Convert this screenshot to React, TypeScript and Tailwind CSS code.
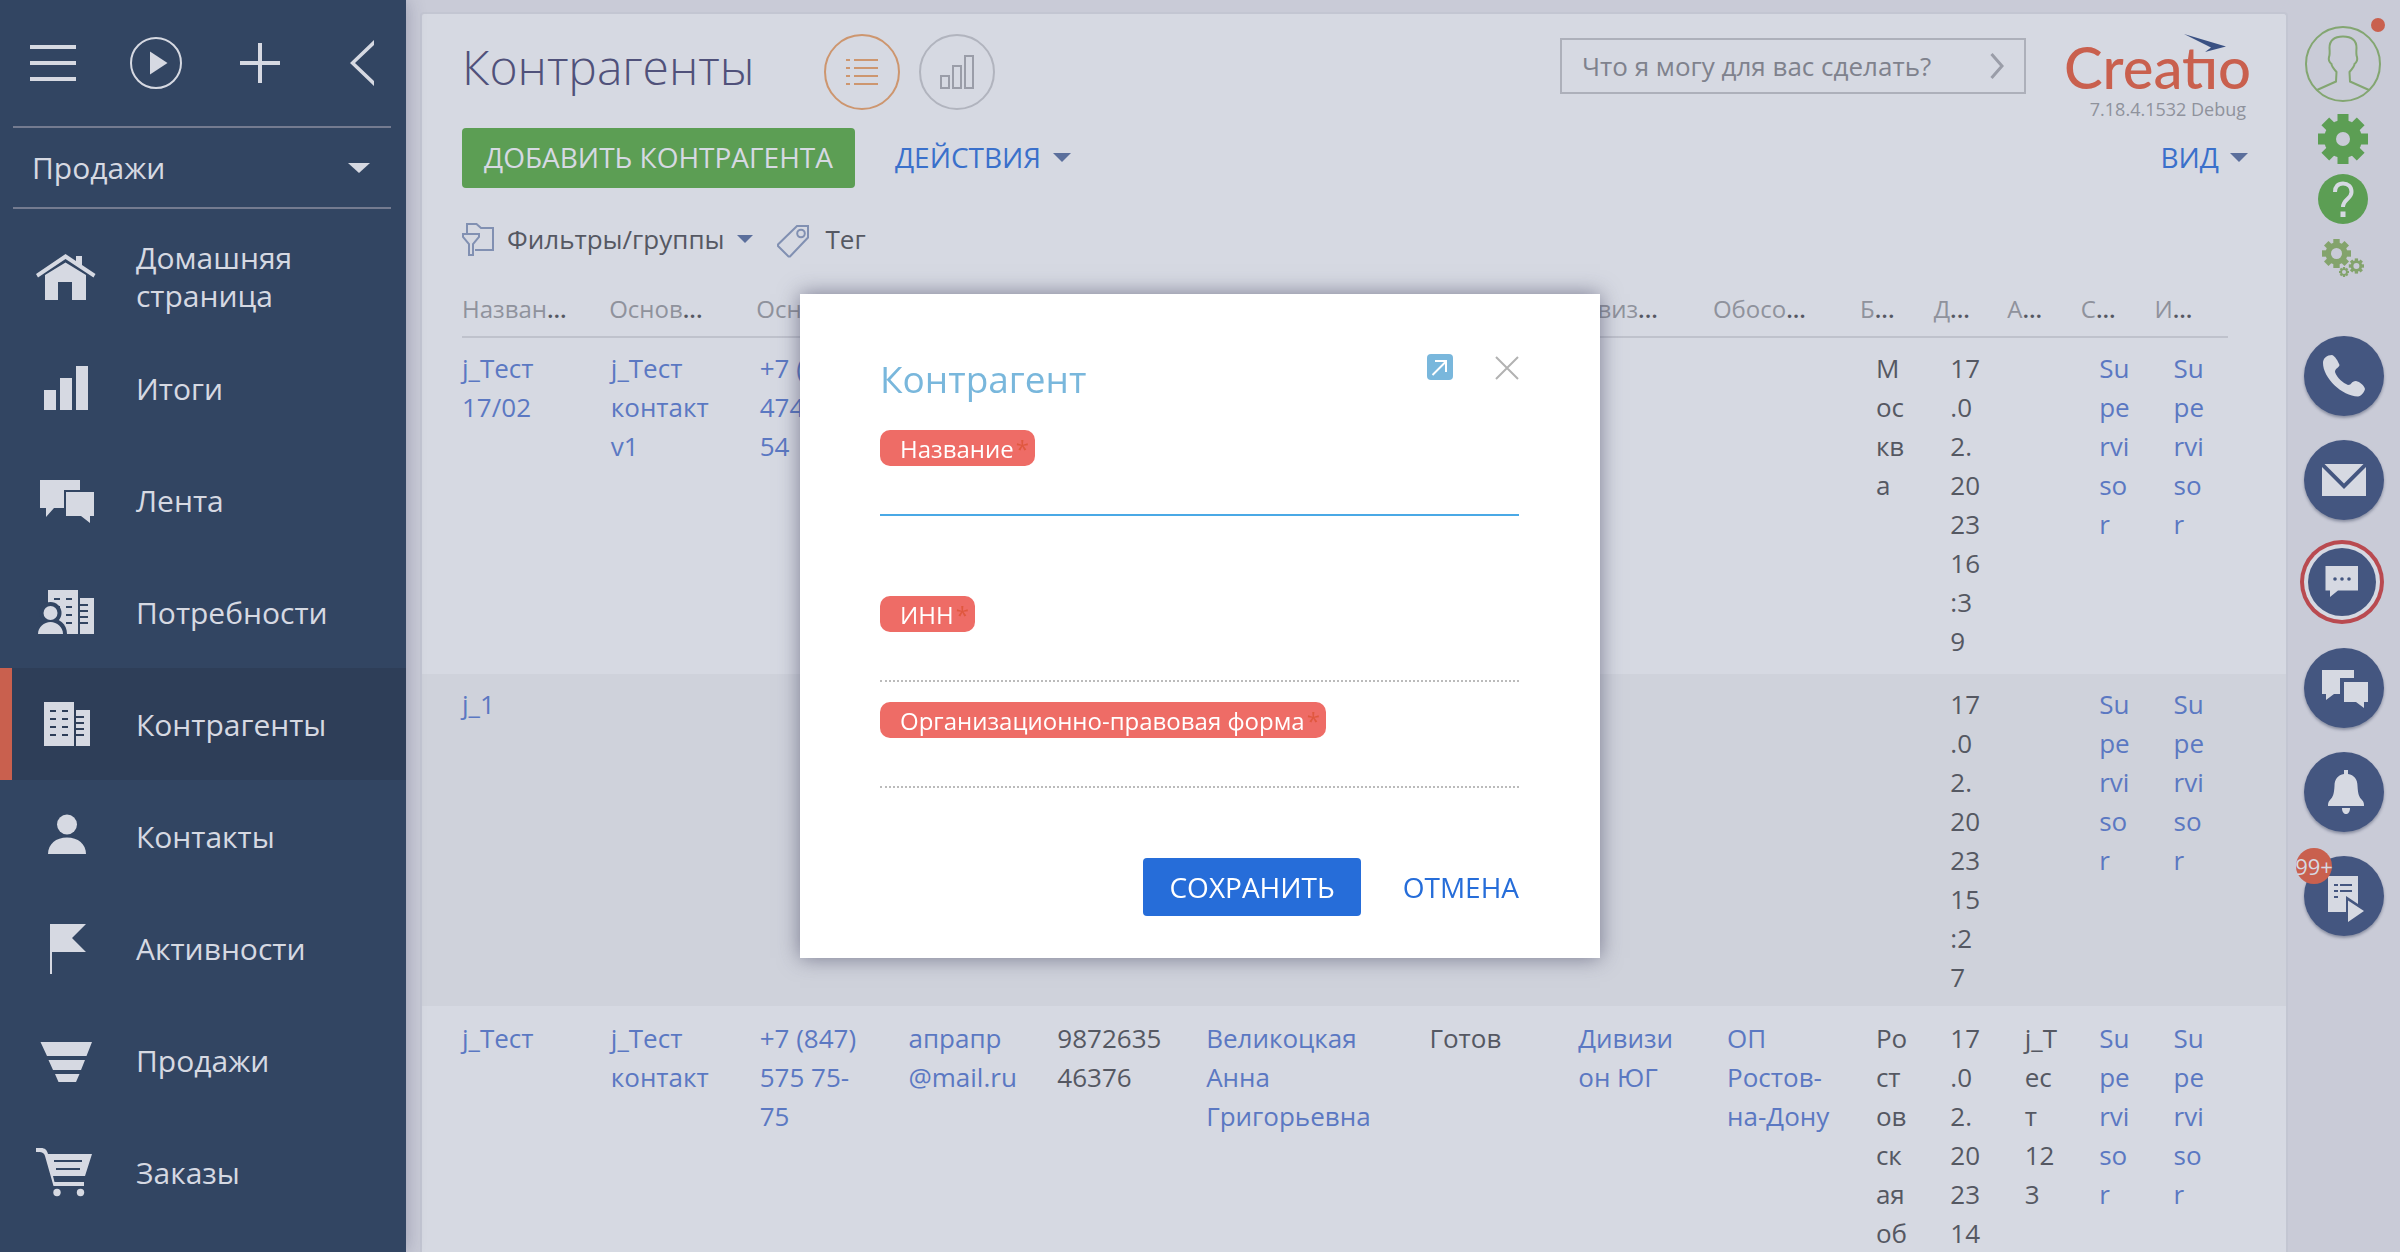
import React from "react";

const windowRows = [16, 24, 32, 40];
const notchRows = [22, 28, 34, 40];

function Building({ x, gap }: { x: number; gap: string }) {
  return (
    <g>
      <rect x={x} y="8" width="30" height="44" />
      <rect x={x + 32} y="16" width="14" height="36" />
      <g fill={gap}>
        {windowRows.map((y) => (
          <React.Fragment key={y}>
            <rect x={x + 6} y={y} width="6" height="2" />
            <rect x={x + 18} y={y} width="6" height="2" />
          </React.Fragment>
        ))}
        {notchRows.map((y) => (
          <rect key={y} x={x + 32} y={y} width="8" height="2" />
        ))}
      </g>
    </g>
  );
}

const navItems: { label: string; active?: boolean; icon: React.ReactNode }[] = [
  {
    label: "Домашняя страница",
    icon: (
      <g>
        <path d="M29.5 8 L59.5 28 L57.5 31.5 L29.5 13 L2 31.5 L0 28Z" />
        <path d="M40 10h6v10l-6-4z" />
        <path d="M9 29 L29.5 16.5 L50 29 V54 H36 V36 H22 V54 H9Z" />
      </g>
    ),
  },
  { label: "Итоги", icon: <path d="M8 32h12v20H8z M24 20h12v32H24z M40 8h12v44H40z" /> },
  {
    label: "Лента",
    icon: (
      <g>
        <path d="M4 10H44V20H28V38H18L10 47V38H4Z" />
        <path d="M30 22H58V46H54V53L45 46H30Z" />
      </g>
    ),
  },
  {
    label: "Потребности",
    icon: (
      <g>
        <Building x={12} gap="#324562" />
        <circle cx="14.5" cy="31" r="11" fill="#324562" />
        <path d="M-2 52C-2 42 6 36 14.5 36S31 42 31 52Z" fill="#324562" />
        <circle cx="14.5" cy="31" r="7" />
        <path d="M2 52C2 45 8 40 14.5 40S27 45 27 52Z" />
      </g>
    ),
  },
  { label: "Контрагенты", active: true, icon: <Building x={8} gap="#2e3e58" /> },
  {
    label: "Контакты",
    icon: (
      <g>
        <circle cx="31" cy="18.5" r="10" />
        <path d="M12 48C12 38 20 31.5 31 31.5S50 38 50 48Z" />
      </g>
    ),
  },
  { label: "Активности", icon: <path d="M14 6H50L36 20L50 34H16V56H14Z" /> },
  {
    label: "Продажи",
    icon: <path d="M4.5 12H56L50.500 26H11Z M12.500 30H49L45 40H17Z M19 44H43.500L40 52H22.500Z" />,
  },
  {
    label: "Заказы",
    icon: (
      <g>
        <path d="M0 6H5C9 6 11 8 12 12H56L49 34H17L18.500 40H48V44H17.500L9 14C8 10.500 6 10 0 10Z" />
        <path d="M18 18h28v2H18z M20 26h24v2H20z" fill="#324562" />
        <circle cx="21" cy="50.5" r="3.7" />
        <circle cx="44.5" cy="50.5" r="3.7" />
      </g>
    ),
  },
];

function Triangle({ className }: { className: string }) {
  return (
    <svg viewBox="0 0 18 9" preserveAspectRatio="none" className={className} fill="currentColor" aria-hidden="true">
      <path d="M0 0H18L9 9Z" />
    </svg>
  );
}

function Sidebar() {
  return (
    <aside className="z-10 w-[406px] shrink-0 bg-[#324562] text-[30px] text-[#d6d9e2] shadow-[0_0_18px_rgba(40,40,80,0.3)]">
      <div className="flex h-[126px] items-center gap-[54px] pr-8 pl-[30px]">
        <button aria-label="Меню">
          <svg width="46" height="36" fill="currentColor">
            <path d="M0 0h46v4H0z M0 16h46v4H0z M0 32h46v4H0z" />
          </svg>
        </button>
        <button aria-label="Запустить процесс">
          <svg width="52" height="52" fill="none" stroke="currentColor" strokeWidth="2">
            <circle cx="26" cy="26" r="25" />
            <path d="M20 14.500L37.500 26L20 37.500Z" fill="currentColor" stroke="none" />
          </svg>
        </button>
        <button aria-label="Создать" className="flex w-12 justify-center">
          <svg width="40" height="40" fill="currentColor">
            <path d="M18 0h4v18h18v4H22v18h-4V22H0v-4h18z" />
          </svg>
        </button>
        <button aria-label="Свернуть" className="ml-auto">
          <svg width="24" height="46" fill="currentColor">
            <path d="M24 0V5L5 23L24 41V46L0 23Z" />
          </svg>
        </button>
      </div>
      <div className="mr-[15px] mb-[11px] ml-[13px] flex items-center border-y-2 border-[#747b90]">
        <select aria-label="Рабочее место" className="h-[79px] grow appearance-none bg-transparent pl-[19px] outline-none">
          <option>Продажи</option>
        </select>
        <Triangle className="pointer-events-none mr-[21px] h-[10px] w-[22px]" />
      </div>
      <nav>
        {navItems.map((item) => (
          <a
            key={item.label}
            href="#"
            className={
              item.active
                ? "flex h-28 items-center gap-10 border-l-12 border-[#c9604e] bg-[#2e3e58] pr-16 pl-6 leading-[38px]"
                : "flex h-28 items-center gap-10 border-l-12 border-transparent pr-16 pl-6 leading-[38px]"
            }
          >
            <svg width="60" height="60" fill="currentColor" className="shrink-0">
              {item.icon}
            </svg>
            <span className="pt-[2px]">{item.label}</span>
          </a>
        ))}
      </nav>
    </aside>
  );
}

function Header() {
  return (
    <header className="flex items-start pt-5 pr-[38px] pl-10">
      <h1 className="text-[48px] leading-[66px] font-light text-[#50517a]">Контрагенты</h1>
      <div className="ml-[70px] flex gap-[19px]">
        <button aria-label="Реестр" className="flex size-[76px] items-center justify-center rounded-full border-2 border-[#cd966f] text-[#cd966f]">
          <svg width="32" height="26" fill="currentColor">
            <path d="M0 0h4v2H0z M8 0h24v2H8z M0 8h4v2H0z M8 8h24v2H8z M0 16h4v2H0z M8 16h24v2H8z M0 24h4v2H0z M8 24h24v2H8z" />
          </svg>
        </button>
        <button aria-label="Аналитика" className="flex size-[76px] items-center justify-center rounded-full border-2 border-[#b1b4be] text-[#9a9da8]">
          <svg width="34" height="34" fill="none" stroke="currentColor" strokeWidth="2">
            <path d="M1 21h8v12H1z M13 11h8v22H13z M25 1h8v32H25z" />
          </svg>
        </button>
      </div>
      <label className="mt-1 mr-10 ml-auto flex h-14 w-[466px] items-center border-2 border-[#adb0ba] px-5">
        <input
          aria-label="Командная строка"
          placeholder="Что я могу для вас сделать?"
          className="min-w-0 grow bg-transparent text-[26px] outline-none placeholder:text-[#7f828d] placeholder:opacity-100"
        />
        <svg width="14" height="26" fill="none" stroke="#9a9da8" strokeWidth="3">
          <path d="M1.500 1L12 13L1.500 25" />
        </svg>
      </label>
      <div className="relative flex h-[94px] w-[182px] flex-col items-end justify-end pr-[2px] pb-2">
        <span aria-label="Creatio" className="absolute top-[9px] -left-[2px] font-[Lato] text-[58px] leading-[48px] font-medium text-[#c9604e]">
          Creatıo
        </span>
        <svg width="42" height="18" className="absolute top-0 left-[118px]">
          <path d="M0 0L42 12.500L21 18L27 13.500Z" fill="#3a5183" />
        </svg>
        <span className="text-[18px] leading-[22px] text-[#8f929c]">7.18.4.1532 Debug</span>
      </div>
    </header>
  );
}

function Toolbar() {
  return (
    <>
      <div className="flex items-center pr-[38px] pl-10 text-[28px]">
        <button className="h-[60px] rounded bg-[#5c9e54] px-[22px] pb-[2px] text-[#d6d9e2]">ДОБАВИТЬ КОНТРАГЕНТА</button>
        <button className="ml-10 flex items-center gap-3 pb-[2px] text-[#3a70cb]">
          ДЕЙСТВИЯ
          <Triangle className="h-[9px] w-[18px] text-[#5b6f9c]" />
        </button>
        <button className="ml-auto flex items-center gap-[11px] pb-[2px] text-[#3a70cb]">
          ВИД
          <Triangle className="h-[9px] w-[18px] text-[#5b6f9c]" />
        </button>
      </div>
      <div className="mb-[2px] flex h-[102px] items-center pl-10 text-[26px] text-[#555862]">
        <button className="flex items-center gap-[13px]">
          <svg width="32" height="33" fill="none" stroke="#8190b2" strokeWidth="2">
            <path d="M5 11V1H14.500L19 5H31V27H13" />
            <path d="M1 11H17V14L11 21V32H7V21L1 14Z" />
          </svg>
          Фильтры/группы
          <Triangle className="h-2 w-4 text-[#5b6f9c]" />
        </button>
        <button className="ml-6 flex items-center gap-4">
          <svg width="32" height="33" fill="none" stroke="#8190b2" strokeWidth="2" className="mt-1">
            <path d="M20 1H31V12.500L13 31.500H11.500L1 21V19.500Z" />
            <circle cx="24" cy="8.500" r="3.800" />
          </svg>
          Тег
        </button>
      </div>
    </>
  );
}

type Cell = { text: string; link?: boolean };

const spans = [
  "col-span-2", "col-span-2", "col-span-2", "col-span-2", "col-span-2", "col-span-3", "col-span-2",
  "col-span-2", "col-span-2", "col-span-1", "col-span-1", "col-span-1", "col-span-1", "col-span-1",
];

const headings = ["Назван", "Основ", "Основ", "", "", "", "", "Дивиз", "Обосо", "Б", "Д", "А", "С", "И"];

const link = (text: string): Cell => ({ text, link: true });
const plain = (text: string): Cell => ({ text });
const none = plain("");

const rows: Cell[][] = [
  [link("j_Тест 17/02"), link("j_Тест контакт v1"), link("+7 (847) 474 54-54"), none, none, none, none, none, none,
    plain("Москва"), plain("17.02.2023 16:39"), none, link("Supervisor"), link("Supervisor")],
  [link("j_1"), none, none, none, none, none, none, none, none,
    none, plain("17.02.2023 15:27"), none, link("Supervisor"), link("Supervisor")],
  [link("j_Тест"), link("j_Тест контакт"), link("+7 (847) 575 75-75"), link("апрапр @mail.ru"), plain("987263546376"),
    link("Великоцкая Анна Григорьевна"), plain("Готов"), link("Дивизион ЮГ"), link("ОП Ростов-на-Дону"),
    plain("Ростовская об"), plain("17.02.2023 14"), plain("j_Тест 123"), link("Supervisor"), link("Supervisor")],
];

const rowStyles = [
  "grid grid-cols-24 pt-[11px] pr-[38px] pb-[13px] pl-10",
  "grid grid-cols-24 bg-[#cfd2db] pt-[11px] pr-[38px] pb-[9px] pl-10",
  "grid grid-cols-24 pt-[13px] pr-[38px] pl-10",
];

function Grid() {
  return (
    <table className="block text-[26px] text-[#555862]">
      <thead className="block pr-[58px] pl-10">
        <tr className="grid h-[46px] grid-cols-24 border-b-2 border-[#bfc2cc]">
          {headings.map((heading, i) => (
            <th key={i} className={`${spans[i]} text-left text-[24px] leading-[34px] font-semibold whitespace-nowrap`}>
              {heading && (
                <>
                  <span className="font-normal text-[#8f929c]">{heading}</span>...
                </>
              )}
            </th>
          ))}
        </tr>
      </thead>
      <tbody className="block">
        {rows.map((row, r) => (
          <tr key={r} className={rowStyles[r]}>
            {row.map((cell, i) => (
              <td key={i} className={`${spans[i]} pr-10 leading-[39px] wrap-break-word`}>
                {cell.link ? (
                  <a href="#" className="text-[#5b78c2]">
                    {cell.text}
                  </a>
                ) : (
                  cell.text
                )}
              </td>
            ))}
          </tr>
        ))}
      </tbody>
    </table>
  );
}

function Cog({ x, y, r, hole, hue }: { x: number; y: number; r: number; hole: number; hue: string }) {
  return (
    <g transform={`translate(${x} ${y})`} fill={hue}>
      <circle r={r * 0.76} />
      {[0, 45, 90, 135].map((angle) => (
        <rect key={angle} x={-r * 0.22} y={-r} width={r * 0.44} height={r * 2} transform={`rotate(${angle})`} />
      ))}
      <circle r={hole} fill="#c9cbd7" />
    </g>
  );
}

function RailButton({ label, children }: { label: string; children: React.ReactNode }) {
  return (
    <button aria-label={label} className="size-20 shrink-0 rounded-full bg-[#445680] text-[#d6d9e2] shadow-[0_2px_3px_rgba(40,50,80,0.4)]">
      <svg width="80" height="80" fill="currentColor">
        {children}
      </svg>
    </button>
  );
}

function Rail() {
  return (
    <aside className="flex w-28 shrink-0 flex-col items-center pt-[26px]">
      <div className="flex flex-col items-center pr-[3px]">
        <button aria-label="Профиль" className="relative size-[76px]">
          <svg width="76" height="76" fill="none" stroke="#83a671" strokeWidth="2">
            <circle cx="38" cy="38" r="37" />
            <path d="M12 64L31 55.500L31.500 46C28 42 26.500 39 26.500 38C24 36 23.500 33 24 31C24.500 30 25 29 24.500 22C24.500 14 30 10.500 38 10.500S51.500 14 51.500 22C51 29 51.500 30 52 31C52.500 33 52 36 49.500 38C49.500 39 48 42 44.500 46L45 55.500L64 64" />
          </svg>
          <span className="absolute -top-2 -right-1 size-[14px] rounded-full bg-[#c9604e]" />
        </button>
        <button aria-label="Настройки" className="mt-3">
          <svg width="50" height="50">
            <Cog x={25} y={25} r={25} hole={7} hue="#5c9e54" />
          </svg>
        </button>
        <button aria-label="Справка" className="mt-[10px]">
          <svg width="50" height="50" fill="none">
            <circle cx="25" cy="25" r="25" fill="#5c9e54" />
            <path d="M17 18C17 12.500 20 9.500 25 9.500S33.500 12.500 33.500 18C33.500 25 25 25 25 33" stroke="#d6d9e2" strokeWidth="4" />
            <path d="M22.500 37.500h5v5.500h-5z" fill="#d6d9e2" />
          </svg>
        </button>
        <button aria-label="Конфигурация" className="mt-[15px] mb-[59px]">
          <svg width="42" height="38">
            <Cog x={14.5} y={14.5} r={14.5} hole={5.5} hue="#83a36c" />
            <Cog x={34.4} y={27} r={7.6} hole={3} hue="#83a36c" />
            <Cog x={22} y={33} r={5} hole={2} hue="#83a36c" />
          </svg>
        </button>
      </div>
      <div className="flex flex-col items-center gap-6">
        <RailButton label="Звонки">
          <path d="M19 27C19 22 23 19 28 19C31 20 34 25 35.500 29C35 32 31 32 31 36C33 42 39 47 44 49C48 49 47 45 52 45C56 46 60 49 61 53C60 57 57 60 54 60.500C38 60 19 42 19 27Z" />
        </RailButton>
        <RailButton label="Почта">
          <path d="M20.500 24H59.500L40 43.500Z M18 27L40 49L62 27V56H18Z" />
        </RailButton>
        <button aria-label="Чаты" className="-mt-1 mr-1">
          <svg width="84" height="84" className="block">
            <circle cx="42" cy="42" r="42" fill="#b94a50" />
            <circle cx="42" cy="42" r="38" fill="#d6d9e2" />
            <circle cx="42" cy="42" r="34" fill="#445680" />
            <path d="M25.500 26H58V50.500H38L30 57V50.500H25.500Z" fill="#d6d9e2" />
            <g fill="#445680">
              <circle cx="35" cy="39" r="1.800" />
              <circle cx="42" cy="39" r="1.800" />
              <circle cx="49" cy="39" r="1.800" />
            </g>
          </svg>
        </button>
        <RailButton label="Лента">
          <path d="M18 22H50V30H36V46H30L22 52V46H18Z M40 34H64V54H60V60L52 54H40Z" />
        </RailButton>
        <RailButton label="Уведомления">
          <path d="M40 18H44V22C50 23 53.500 27 53.500 34C54 42 55 45 58 48C60 50 60 52 60 54H24C24 52 24 50 26 48C29 45 30 42 30.500 34C30.500 27 34 23 40 22Z" />
          <path d="M38 56H46C46 60 44 62 42 62S38 60 38 56Z" />
        </RailButton>
        <div className="relative">
          <RailButton label="Бизнес-процессы">
            <path d="M24 20H54V48L42 40V56H24Z M44 44.500L60 55L44 66Z" />
            <path d="M30 28h4v2h-4z M36 28h12v2H36z M30 34h4v2h-4z M36 34h12v2H36z M30 40h4v2h-4z" fill="#445680" />
          </RailButton>
          <span className="absolute -top-2 -left-2 flex size-9 items-center justify-center rounded-full bg-[#c9604e] text-[22px] text-[#d6d9e2]">
            99+
          </span>
        </div>
      </div>
    </aside>
  );
}

function Field({ id, label, className }: { id: string; label: string; className: string }) {
  return (
    <div className="flex flex-col items-start">
      <label htmlFor={id} className="flex h-9 items-center rounded-[10px] bg-[#ee6c66] pt-px pr-[6px] pl-5 text-[24px] text-white">
        {label}
        <span className="ml-[2px] text-[#e0583f]">*</span>
      </label>
      <input id={id} className={`h-[50px] w-full border-b-2 text-[26px] outline-none ${className}`} />
    </div>
  );
}

function Dialog() {
  return (
    <div className="fixed inset-0 z-20 flex items-center justify-center">
      <form role="dialog" aria-label="Контрагент" className="w-[800px] bg-white pt-[60px] pr-[81px] pb-[42px] pl-20 shadow-[0_0_20px_rgba(60,60,90,0.6)]">
        <div className="mb-5 flex h-14 items-start">
          <h2 className="grow text-[37px] leading-[50px] text-[#79b7dc]">Контрагент</h2>
          <button type="button" aria-label="Открыть карточку" className="mr-[42px]">
            <svg width="26" height="26" fill="none" stroke="#fff" strokeWidth="2">
              <rect width="26" height="26" rx="4" fill="#79b7dc" stroke="none" />
              <path d="M5.500 21L19 7.500M8 7H19V18" />
            </svg>
          </button>
          <button type="button" aria-label="Закрыть" className="mt-[2px]">
            <svg width="24" height="24" fill="none" stroke="#b2b2b2" strokeWidth="2">
              <path d="M1 1L23 23M23 1L1 23" />
            </svg>
          </button>
        </div>
        <Field id="name" label="Название" className="border-[#4aa9e6]" />
        <div className="mt-20 flex flex-col gap-5">
          <Field id="inn" label="ИНН" className="border-dotted border-[#bbbbbb]" />
          <Field id="form" label="Организационно-правовая форма" className="border-dotted border-[#bbbbbb]" />
        </div>
        <div className="mt-[70px] flex justify-end gap-[42px] text-[28px]">
          <button type="button" className="h-[58px] rounded bg-[#266dd9] px-[26px] text-white">
            СОХРАНИТЬ
          </button>
          <button type="button" className="text-[#266dd9]">ОТМЕНА</button>
        </div>
      </form>
    </div>
  );
}

export default function App() {
  return (
    <div className="flex h-screen overflow-hidden bg-[#c9cbd7] font-['Open_Sans',sans-serif]">
      <Sidebar />
      <main className="mt-3 ml-[14px] min-w-0 grow rounded-t border-2 border-b-0 border-[#c3c6d2] bg-[#d6d9e2]">
        <Header />
        <Toolbar />
        <Grid />
      </main>
      <Rail />
      <Dialog />
    </div>
  );
}
